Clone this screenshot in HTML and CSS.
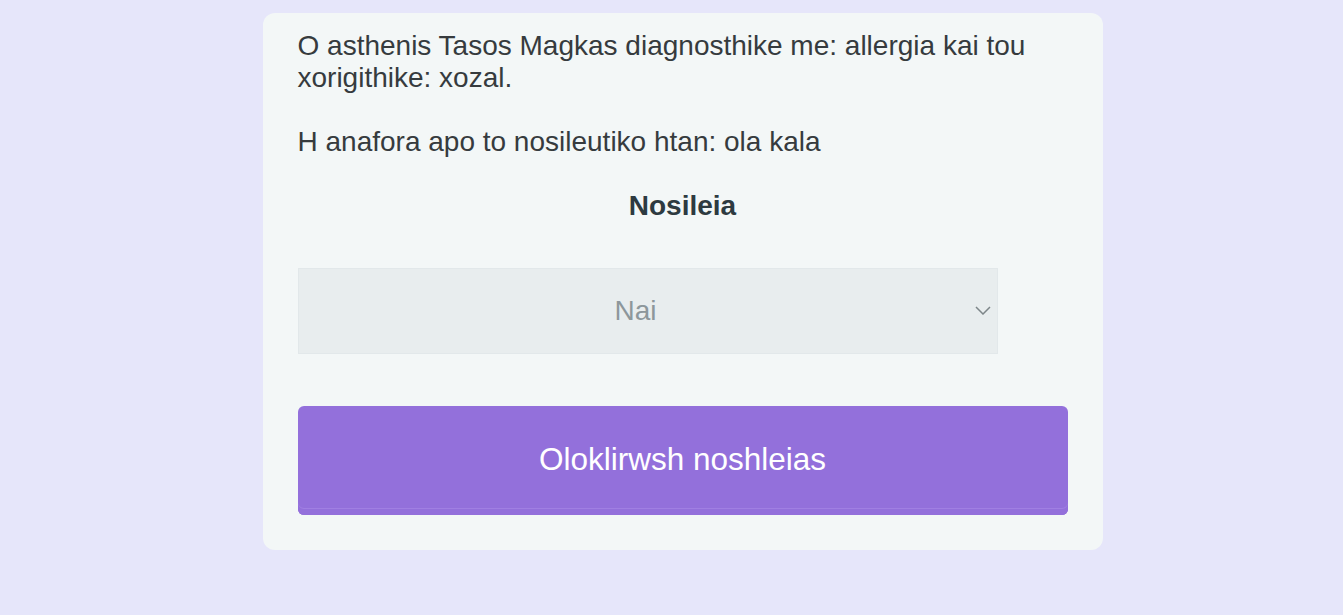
FILE: index.html
```html
<!DOCTYPE html>
<html lang="el">
<head>
<meta charset="utf-8">
<title>Nosileia</title>
<link rel="stylesheet" href="styles.css">
</head>
<body>
<main class="card">
  <p class="report">O asthenis Tasos Magkas diagnosthike me: allergia kai tou xorigithike: xozal.<br><br>H anafora apo to nosileutiko htan: ola kala</p>
  <label class="label" for="nosileia">Nosileia</label>
  <div class="select-wrap">
    <select id="nosileia" class="select">
      <option>Nai</option>
      <option>Oxi</option>
    </select>
    <svg class="chevron" width="16" height="9" viewBox="0 0 16 9" aria-hidden="true"><path d="M1 1 L8 8 L15 1" fill="none" stroke="#7d8689" stroke-width="1.5"/></svg>
  </div>
  <button class="submit" type="button">Oloklirwsh noshleias</button>
</main>
</body>
</html>
```

FILE: styles.css
```css
html, body {
  margin: 0;
  padding: 0;
}
body {
  background: #e6e6fa;
  font-family: "Liberation Sans", Arial, sans-serif;
  color: #363b3e;
  padding-top: 13px;
  padding-left: 22px;
  height: 615px;
  box-sizing: border-box;
}
.card {
  width: 840px;
  box-sizing: border-box;
  margin: 0 auto;
  background: #f3f7f7;
  border-radius: 12px;
  padding: 17px 35px 35px;
  display: flex;
  flex-direction: column;
}
.report {
  margin: 0;
  font-size: 28px;
  line-height: normal;
}
.label {
  margin-top: 32px;
  font-size: 28px;
  font-weight: bold;
  text-align: center;
  color: #2d3a40;
}
.select-wrap {
  position: relative;
  width: 700px;
  margin-top: 46px;
}
.select {
  appearance: none;
  -webkit-appearance: none;
  display: block;
  width: 700px;
  height: 86px;
  margin: 0;
  border: 1px solid #e2e8ea;
  border-radius: 0;
  background: #e8edee;
  font-family: "Liberation Sans", Arial, sans-serif;
  font-size: 28px;
  color: #8d979b;
  text-align: center;
  text-align-last: center;
  padding: 0 44px 2px 20px;
}
.chevron {
  position: absolute;
  right: 7px;
  top: 38px;
  pointer-events: none;
}
.submit {
  margin-top: 52px;
  height: 109px;
  width: 100%;
  border: none;
  border-radius: 6px;
  background: #9370db;
  box-shadow: inset 0 -6px 0 #9370db, inset 0 -7px 0 #a07fe2;
  color: #ffffff;
  font-family: "Liberation Sans", Arial, sans-serif;
  font-size: 31.5px;
  padding: 0 0 2px;
  cursor: pointer;
}
```
